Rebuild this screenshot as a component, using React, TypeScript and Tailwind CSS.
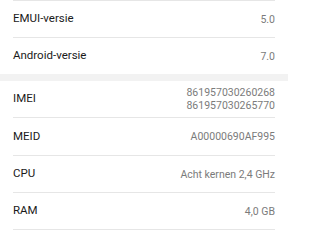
const rowsTop = [
  { label: 'EMUI-versie', value: ['5.0'] },
  { label: 'Android-versie', value: ['7.0'] },
]

function Row({ label, value, h, border = true }: { label: string; value: string[]; h: string; border?: boolean }) {
  return (
    <div className={`flex items-center justify-between ${h} ${border ? 'border-t border-[#e6e6e6]' : ''}`}>
      <span className="text-[11.5px] text-[#1a1a1a]">{label}</span>
      <div className="flex flex-col items-end text-[10.5px] leading-[13px] text-[#7b7b7b]">
        {value.map((v) => (
          <span key={v}>{v}</span>
        ))}
      </div>
    </div>
  )
}

export default function App() {
  return (
    <div className="w-[288px] h-[238px] bg-white overflow-hidden" style={{ fontFamily: 'Roboto, "Noto Sans", sans-serif' }}>
      <div className="px-[13px]">
        {rowsTop.map((r) => (
          <Row key={r.label} label={r.label} value={r.value} h="h-[37px]" />
        ))}
      </div>
      <div className="h-[7px] bg-[#f2f2f2]" />
      <div className="px-[13px]">
        <Row label="IMEI" value={['861957030260268', '861957030265770']} h="h-[36px]" border={false} />
        <Row label="MEID" value={['A00000690AF995']} h="h-[38px]" />
        <Row label="CPU" value={['Acht kernen 2,4 GHz']} h="h-[37px]" />
        <Row label="RAM" value={['4,0 GB']} h="h-[37px]" />
        <div className="border-t border-[#e6e6e6]" />
      </div>
    </div>
  )
}
